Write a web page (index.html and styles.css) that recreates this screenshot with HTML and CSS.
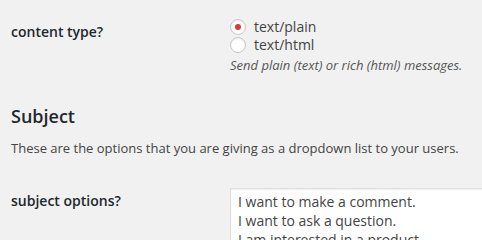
FILE: index.html
```html
<!DOCTYPE html>
<html>
<head>
<meta charset="utf-8">
<link rel="stylesheet" href="styles.css">
</head>
<body>
<div class="wrap">
  <div class="row row-type">
    <div class="label">content type?</div>
    <div class="field">
      <label class="opt"><input type="radio" name="ct" checked><span>text/plain</span></label>
      <label class="opt"><input type="radio" name="ct"><span>text/html</span></label>
      <p class="desc">Send plain (text) or rich (html) messages.</p>
    </div>
  </div>
  <h2 class="section">Subject</h2>
  <p class="intro">These are the options that you are giving as a dropdown list to your users.</p>
  <div class="row row-subject">
    <div class="label">subject options?</div>
    <div class="field">
      <textarea class="options" rows="5">I want to make a comment.
I want to ask a question.
I am interested in a product.
I have a support question.
Other</textarea>
    </div>
  </div>
</div>
</body>
</html>
```
FILE: styles.css
```css
html, body {
  margin: 0;
  padding: 0;
  background: #f1f1f1;
  overflow: hidden;
}
body {
  font-family: "Open Sans", "Noto Sans", sans-serif;
  color: #444;
  font-size: 13px;
}
.wrap {
  padding-left: 11px;
}
.row {
  display: grid;
  grid-template-columns: 219px 1fr;
}
.row-type {
  padding-top: 18px;
}
.label {
  font-size: 14px;
  font-weight: 600;
  color: #23282d;
  line-height: 18px;
  padding-top: 5px;
}
.field {
  display: flex;
  flex-direction: column;
  align-items: flex-start;
}
.opt {
  display: flex;
  align-items: center;
  font-size: 14px;
  line-height: 18px;
  height: 18px;
  color: #444;
}
.opt input {
  appearance: none;
  -webkit-appearance: none;
  width: 16px;
  height: 16px;
  margin: 0 8px 0 0;
  border: 1px solid #c8c8c8;
  border-radius: 50%;
  background: #fff;
  box-shadow: inset 0 1px 2px rgba(0,0,0,0.08);
  display: flex;
  align-items: center;
  justify-content: center;
  box-sizing: border-box;
}
.opt input:checked::before {
  content: "";
  width: 6px;
  height: 6px;
  border-radius: 50%;
  background: #dd3a3a;
}
.desc {
  margin: 2px 0 0 0;
  font-style: italic;
  font-size: 13px;
  line-height: 18px;
  color: #555;
}
.section {
  margin: 30px 0 0 0;
  font-size: 18px;
  font-weight: 600;
  color: #23282d;
  line-height: 24px;
}
.intro {
  margin: 11px 0 0 0;
  font-size: 13px;
  line-height: 18px;
  color: #444;
}
.row-subject {
  padding-top: 31px;
}
.row-subject .label {
  padding-top: 4px;
}
.options {
  width: 400px;
  height: 100px;
  box-sizing: border-box;
  border: 1px solid #ddd;
  background: #fff;
  font-family: "Open Sans", "Noto Sans", sans-serif;
  font-size: 14px;
  line-height: 19px;
  color: #444;
  padding: 3px 7px;
  margin: 0;
  resize: none;
  box-shadow: inset 0 1px 2px rgba(0,0,0,0.07);
}
```
